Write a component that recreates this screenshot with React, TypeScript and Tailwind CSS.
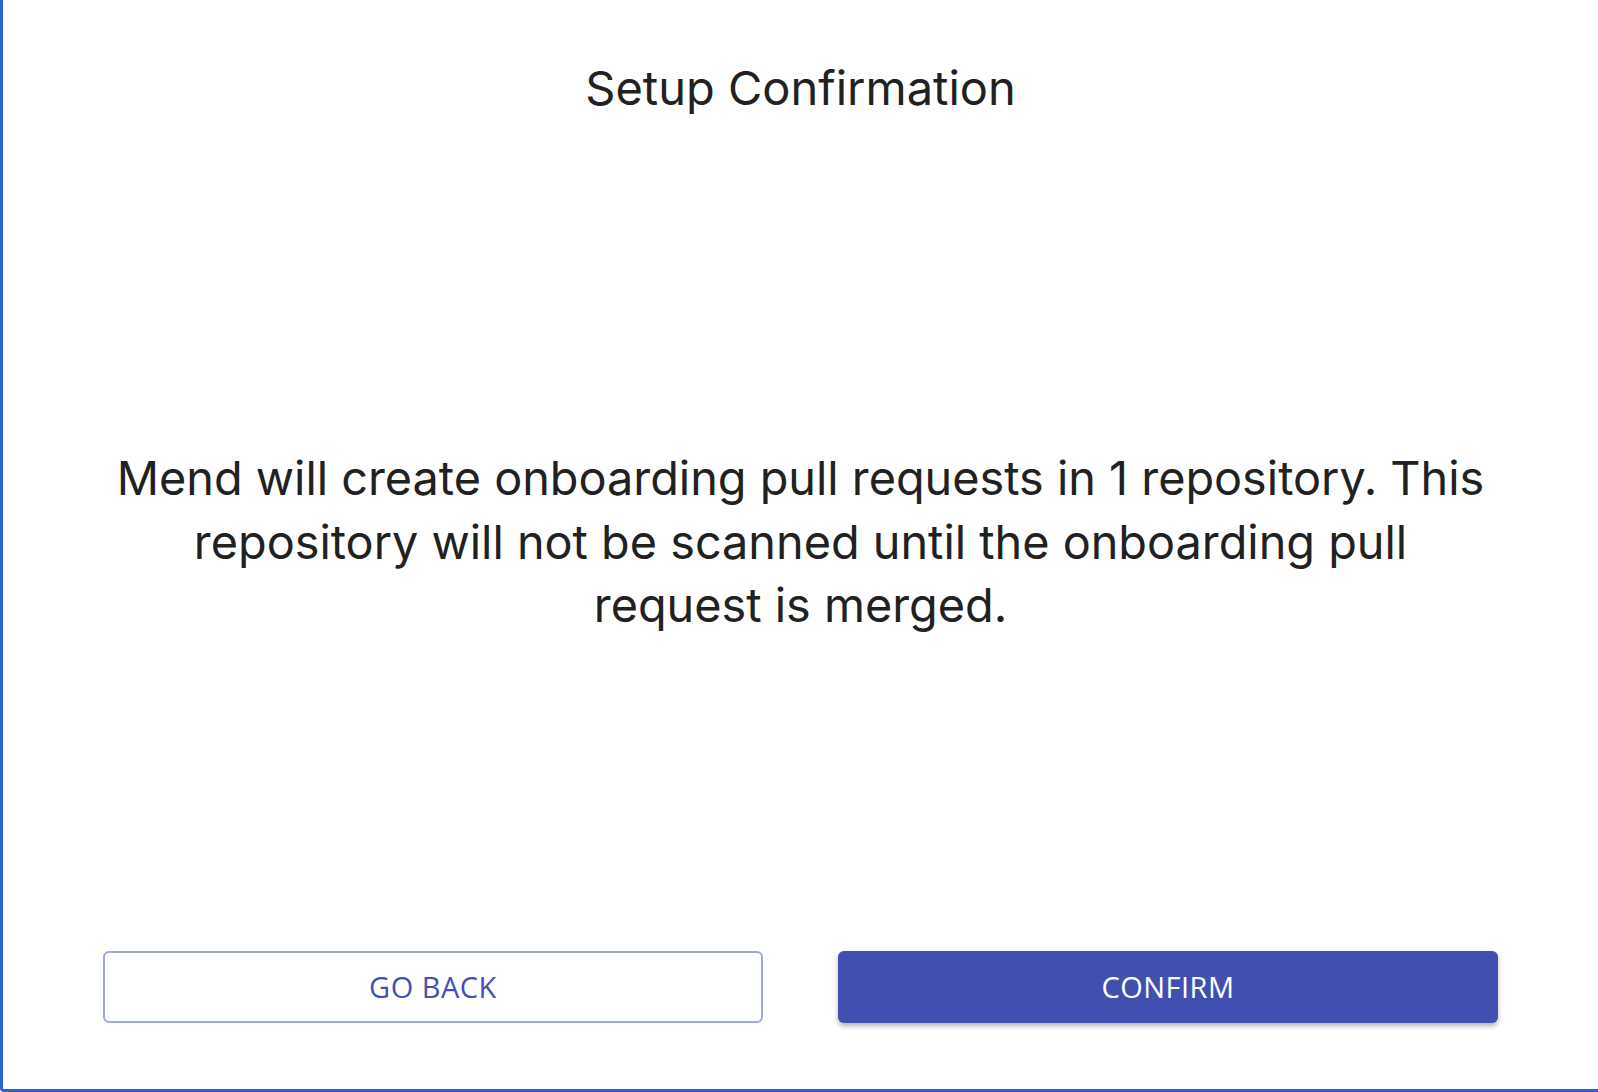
import React from 'react';

export default function App() {
  return (
    <div className="h-[1092px] w-full bg-white border-l-[3px] border-b-[3px] border-[#2c60d2] rounded-bl-[4px] flex flex-col font-['Inter',sans-serif] text-[#212121]">
      <h1 className="pt-[58px] text-center text-[47px] leading-[60px] font-normal">Setup Confirmation</h1>

      <p className="mt-[329px] px-[60px] text-center text-[46.8px] leading-[63.5px]">
        Mend will create onboarding pull requests in 1 repository. This
        <br />
        repository will not be scanned until the onboarding pull
        <br />
        request is merged.
      </p>

      <div className="mt-auto mb-[66px] px-[100px] grid grid-cols-2 gap-[75px]">
        <button className="h-[72px] rounded-[6px] border-2 border-[#9fa8da] bg-white text-[#3f51b5] text-[29px] tracking-[0.5px] font-['Open_Sans',sans-serif]">
          GO BACK
        </button>
        <button className="h-[72px] rounded-[6px] bg-[#4150ae] text-white text-[29px] tracking-[0.5px] font-['Open_Sans',sans-serif] shadow-[0_3px_5px_rgba(0,0,0,0.3)]">
          CONFIRM
        </button>
      </div>
    </div>
  );
}
